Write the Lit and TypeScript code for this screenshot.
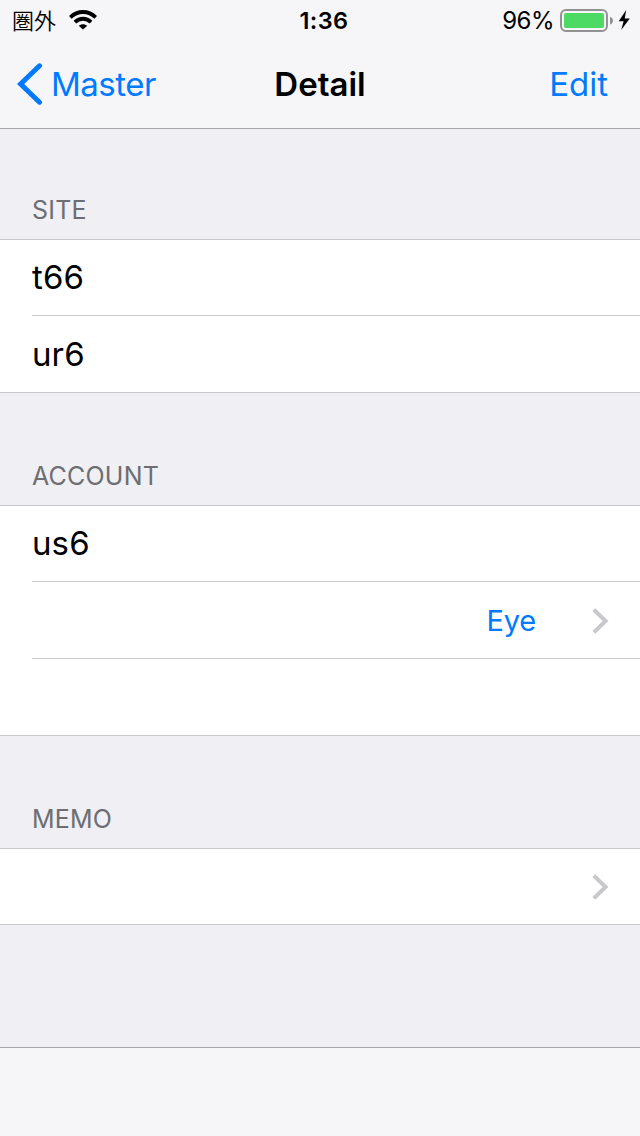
import { LitElement, html, css, svg } from "lit";
import { customElement, property } from "lit/decorators.js";

interface Row {
  text?: string;
  action?: string;
  chevron?: boolean;
}

interface Section {
  title: string;
  rows: Row[];
}

const SECTIONS: Section[] = [
  { title: "SITE", rows: [{ text: "t66" }, { text: "ur6" }] },
  { title: "ACCOUNT", rows: [{ text: "us6" }, { action: "Eye", chevron: true }, {}] },
  { title: "MEMO", rows: [{ chevron: true }] },
];

@customElement("status-bar")
export class StatusBar extends LitElement {
  static styles = css`
    :host {
      display: grid;
      grid-template-columns: 1fr auto 1fr;
      grid-template-rows: 40px;
      height: 40px;
      align-items: center;
      color: #000;
      font-size: 24px;
      line-height: 38px;
    }
    .left, .right { display: flex; align-items: center; height: 40px; }
    .left { padding-left: 12px; }
    .carrier {
      font-family: "Noto Sans CJK JP", sans-serif;
      font-weight: 350;
      font-size: 22px;
      line-height: 38px;
      padding-bottom: 2px;
      margin-right: 13px;
    }
    .time { font-weight: 600; font-size: 23.5px; letter-spacing: 0.4px; padding: 2px 0 0 8px; }
    .right { justify-content: flex-end; padding-right: 9px; }
    .percent { font-size: 24px; letter-spacing: -0.5px; padding-top: 2px; margin-right: 6px; }
    svg { display: block; flex: none; }
  `;

  render() {
    return html`
      <div class="left">
        <span class="carrier">圏外</span>
        <svg width="28" height="20" viewBox="0 0 28 20">
          <g fill="none" stroke="#000" stroke-width="3.8">
            <path d="M1.3 7.4C8.6 .2 19.4 .2 26.7 7.4" />
            <path d="M5.9 12.1C10.7 7.6 17.3 7.6 22.1 12.1" />
          </g>
          <path d="M14 19.6L9.7 15.8C12.2 13.6 15.8 13.6 18.3 15.8Z" />
        </svg>
      </div>
      <span class="time">1:36</span>
      <div class="right">
        <span class="percent">96%</span>
        <svg width="71" height="24" viewBox="0 0 71 24">
          <rect x="1" y="2" width="46" height="21" rx="5" fill="none" stroke="#929294" stroke-width="2" />
          <rect x="4" y="5" width="40" height="15" rx="2" fill="#4cd964" />
          <path d="M50 8.8C54 10 54 15.4 50 16.6Z" fill="#929294" />
          <path d="M66.2 2L58.7 13.2H63.6L61.2 22L69.8 10.6H64.7Z" fill="#000" />
        </svg>
      </div>
    `;
  }
}

@customElement("nav-bar")
export class NavBar extends LitElement {
  static styles = css`
    :host {
      display: grid;
      grid-template-columns: 1fr auto 1fr;
      height: 88px;
      align-items: center;
      font-size: 33px;
      line-height: 88px;
    }
    .back { display: flex; align-items: center; padding-left: 17px; color: #007aff; }
    .back svg { display: block; margin-right: 8px; }
    .label { letter-spacing: -0.5px; }
    .title { font-weight: 600; color: #000; }
    .edit { text-align: right; padding-right: 32px; color: #007aff; }
  `;

  render() {
    return html`
      <div class="back">
        <svg width="26" height="42" viewBox="0 0 26 42">
          <path d="M22.5 2.8L3.6 21L22.5 39.2" fill="none" stroke="#007aff" stroke-width="5" stroke-linecap="round" />
        </svg>
        <span class="label">Master</span>
      </div>
      <span class="title">Detail</span>
      <span class="edit">Edit</span>
    `;
  }
}

@customElement("table-section")
export class TableSection extends LitElement {
  @property({ attribute: false }) section!: Section;

  static styles = css`
    :host { display: block; }
    .header {
      box-sizing: border-box;
      height: 112px;
      padding: 67px 32px 0;
      font-size: 25px;
      letter-spacing: 0.2px;
      line-height: 32px;
      color: #6d6d72;
    }
    .rows {
      background: #fff;
      border-top: 1px solid #c8c7cc;
      border-bottom: 1px solid #c8c7cc;
    }
    .row {
      display: flex;
      box-sizing: border-box;
      height: 77px;
      align-items: center;
      margin-left: 32px;
      padding-right: 31px;
      font-size: 33px;
      letter-spacing: 0.1px;
      line-height: 40px;
      color: #000;
      border-top: 1px solid #c8c7cc;
    }
    .row:first-child { height: 75px; border-top: 0; }
    .row:first-child .text { padding-bottom: 2px; }
    .row:not(:first-child) svg { margin-top: 2px; }
    .text { flex: 1; }
    .action { font-size: 29px; letter-spacing: -0.2px; color: #007aff; margin-right: 56px; padding-top: 2px; }
    svg { display: block; }
  `;

  render() {
    return html`
      <div class="header">${this.section.title}</div>
      <div class="rows">
        ${this.section.rows.map(
          (row) => html`
            <div class="row">
              <span class="text">${row.text ?? ""}</span>
              ${row.action ? html`<span class="action">${row.action}</span>` : ""}
              ${row.chevron
                ? html`<svg width="17" height="26" viewBox="0 0 17 26">
                    ${svg`<path d="M1.8 1.6L13.6 13L1.8 24.4" fill="none" stroke="#c7c7cc" stroke-width="4" />`}
                  </svg>`
                : ""}
            </div>
          `
        )}
      </div>
    `;
  }
}

@customElement("app-root")
export class AppRoot extends LitElement {
  static styles = css`
    :host {
      display: flex;
      flex-direction: column;
      box-sizing: border-box;
      height: 1136px;
      overflow: hidden;
      background: #efeff4;
      font-family: Inter, "Liberation Sans", sans-serif;
    }
    .top { background: #f6f6f8; border-bottom: 1px solid #a7a7ab; }
    .content { flex: 1; min-height: 0; }
    .content table-section:first-child { margin-top: -2px; }
    .toolbar { height: 88px; background: #f6f6f8; border-top: 1px solid #a7a7ab; }
  `;

  render() {
    return html`
      <div class="top">
        <status-bar></status-bar>
        <nav-bar></nav-bar>
      </div>
      <div class="content">
        ${SECTIONS.map((s) => html`<table-section .section=${s}></table-section>`)}
      </div>
      <div class="toolbar"></div>
    `;
  }
}
